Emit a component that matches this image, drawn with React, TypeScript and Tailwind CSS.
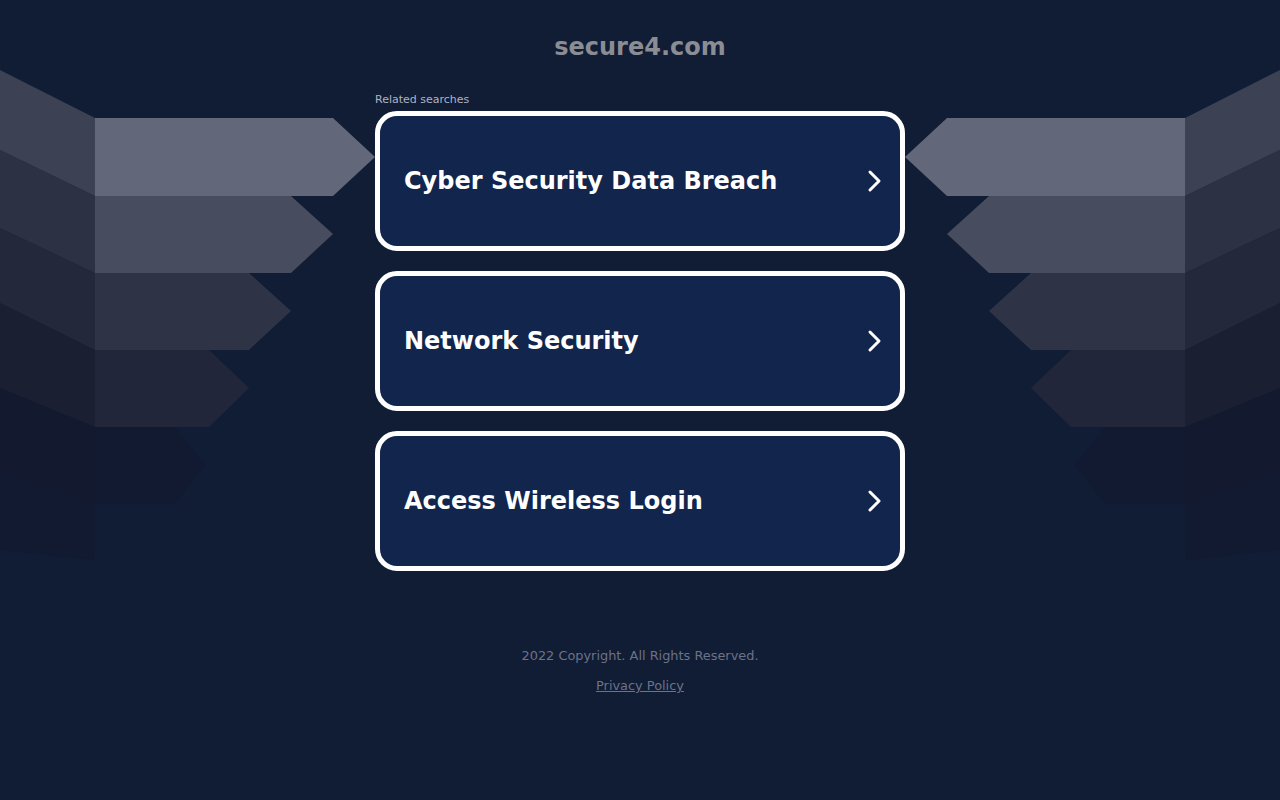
import React from "react";

const Deco = ({ flip }: { flip?: boolean }) => (
  <svg
    width="375"
    height="600"
    viewBox="0 0 375 600"
    className="block"
    style={flip ? { transform: "scaleX(-1)" } : undefined}
  >
    {/* bottom faded sides */}
    <polygon points="0,388 95,427 95,504 0,473" fill="#131a2f" />
    <polygon points="0,473 95,504 95,560 0,550" fill="#121a31" />
    <polygon points="95,427 175,427 205,465 175,504 95,504" fill="#121a31" />
    {/* sides */}
    <polygon points="0,303 95,350 95,427 0,388" fill="#1a1f32" />
    <polygon points="0,228 95,273 95,350 0,303" fill="#24283b" />
    <polygon points="0,150 95,196 95,273 0,228" fill="#2d3144" />
    <polygon points="0,70 95,118 95,196 0,150" fill="#3c4154" />
    {/* arrows */}
    <polygon points="95,350 209,350 249,388 209,427 95,427" fill="#22263a" />
    <polygon points="95,273 249,273 291,311 249,350 95,350" fill="#2f3346" />
    <polygon points="95,196 291,196 333,234 291,273 95,273" fill="#474c5e" />
    <polygon points="95,118 333,118 375,157 333,196 95,196" fill="#62677a" />
  </svg>
);

const Card = ({ label }: { label: string }) => (
  <a
    href="#"
    className="flex h-[140px] w-[530px] items-center justify-between rounded-[22px] border-[5px] border-white bg-[#12254d] pl-[24px] pr-[17px]"
  >
    <span className="text-[24px] font-bold text-white">{label}</span>
    <svg width="16" height="24" viewBox="0 0 16 24" fill="none">
      <path d="M3 3 L12 12 L3 21" stroke="white" strokeWidth="3" strokeLinecap="round" strokeLinejoin="round" />
    </svg>
  </a>
);

export default function App() {
  return (
    <div
      className="min-h-screen w-full bg-[#111c35]"
      style={{ fontFamily: '"DejaVu Sans", "Liberation Sans", sans-serif' }}
    >
      <div className="flex w-full justify-center">
        <div className="flex-1 overflow-hidden">
          <Deco />
        </div>
        <div className="flex w-[530px] flex-col items-center">
          <h1 className="mt-[32px] text-[24px] font-bold leading-[30px] text-[#8a8d94]">secure4.com</h1>
          <div className="mt-[31px] w-full text-left text-[11px] leading-[14px] text-[#aeb4c2]">Related searches</div>
          <div className="mt-[4px] flex flex-col gap-[20px]">
            <Card label="Cyber Security Data Breach" />
            <Card label="Network Security" />
            <Card label="Access Wireless Login" />
          </div>
          <div className="mt-[77px] text-[12.9px] leading-[16px] text-[#6b7388]">2022 Copyright. All Rights Reserved.</div>
          <a href="#" className="mt-[14px] text-[12.9px] leading-[16px] text-[#6b7388] underline">
            Privacy Policy
          </a>
        </div>
        <div className="flex flex-1 justify-end overflow-hidden">
          <Deco flip />
        </div>
      </div>
    </div>
  );
}
